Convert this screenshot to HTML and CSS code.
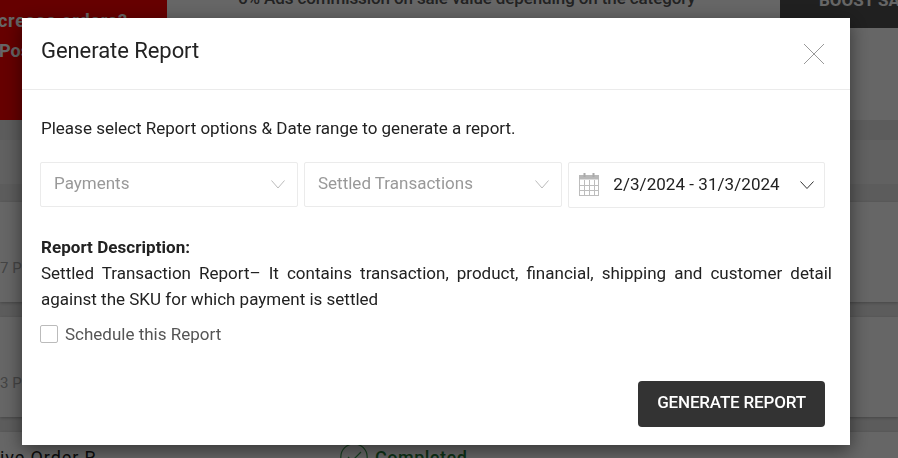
FILE: index.html
```
<!DOCTYPE html>
<html lang="en">
<head>
<meta charset="utf-8">
<title>Generate Report</title>
<link rel="stylesheet" href="styles.css">
</head>
<body>
<main class="page">
  <section class="banner">
    <div class="promo"><span class="promo-a">crease orders?</span><span class="promo-b">Post</span></div>
    <div class="commission">6% Ads commission on sale value depending on the category</div>
    <div class="boost">BOOST SALES</div>
  </section>
  <div class="tabs"></div>
  <article class="row"><span class="time">7 PM</span></article>
  <article class="row"><span class="time">3 PM</span></article>
  <article class="row last">
    <span class="order">ive Order R</span>
    <svg class="done" viewBox="0 0 28 28"><circle cx="14" cy="14" r="13.2"/><path d="M8 14l4 4 9-9"/></svg>
    <span class="status">Completed</span>
  </article>
</main>
<div class="overlay">
  <section class="modal">
    <header class="head">
      <h1>Generate Report</h1>
      <svg class="close" viewBox="0 0 22 22"><path d="M1 1L21 21M21 1L1 21"/></svg>
    </header>
    <div class="body">
      <p class="intro">Please select Report options &amp; Date range to generate a report.</p>
      <div class="fields">
        <div class="select"><span>Payments</span><svg class="chev" viewBox="0 0 14 9"><path d="M.5 .5L7 8L13.500 .5"/></svg></div>
        <div class="select"><span>Settled Transactions</span><svg class="chev" viewBox="0 0 14 9"><path d="M.5 .5L7 8L13.500 .5"/></svg></div>
        <div class="select date">
          <svg class="cal" viewBox="0 0 20 23">
            <path class="cal-fill" d="M0 2h20v4.500H0z"/>
            <path class="cal-ring" d="M5.500 0v4M14.500 0v4"/>
            <path class="cal-grid" d="M.5 6v16.500h19V6M5.500 7v15M10.500 7v15M15.500 7v15M0 12.500h20M0 17.500h20M0 22.500h20"/>
          </svg>
          <span class="range">2/3/2024 - 31/3/2024</span>
          <svg class="chev" viewBox="0 0 14 9"><path d="M.5 .5L7 7.500L13.500 .5"/></svg>
        </div>
      </div>
      <h2>Report Description:</h2>
      <p class="desc"><span class="line wide">Settled Transaction Report– It contains transaction, product, financial, shipping and customer detail</span> <span class="line">against the SKU for which payment is settled</span></p>
      <label class="schedule"><span class="box"></span><span>Schedule this Report</span></label>
      <button class="submit" type="button">GENERATE REPORT</button>
    </div>
  </section>
</div>
</body>
</html>
```
FILE: styles.css
```
* { box-sizing: border-box; }
body, h1, h2, p { margin: 0; }
body { font-family: Roboto, "Liberation Sans", sans-serif; font-size: 17px; color: #222; overflow: hidden; height: 458px; }
svg { display: block; fill: none; flex: none; }
.page { height: 458px; overflow: hidden; background: #e7e7e7; white-space: nowrap; }
.banner { height: 120px; background: #fff; display: flex; }
.promo { width: 167px; flex: none; background: #ff0000; color: #fff; font-weight: 700; font-size: 18px; line-height: 30px; padding-top: 6px; display: flex; flex-direction: column; }
.promo-a { margin-left: -2px; letter-spacing: .7px; }
.promo-b { margin-left: -1px; }
.commission { width: 613px; flex: none; padding-left: 71px; color: #555; font-weight: 500; line-height: 20px; margin-top: -12px; letter-spacing: -.11px; }
.boost { width: 118px; flex: none; height: 28px; background: #505050; color: #fff; font-weight: 700; padding-left: 39px; line-height: 20px; overflow: hidden; }
.boost { line-height: 0; padding-top: 0; }
.tabs { height: 44px; margin: 20px 0 18px; background: #f2f2f2; }
.row { height: 100px; margin-bottom: 15px; background: #fff; box-shadow: 0 1px 3px rgba(0,0,0,.25); display: flex; padding-top: 56px; line-height: 20px; }
.time { color: #aaa; font-size: 15px; }
.last { padding-top: 11px; }
.order { width: 340px; flex: none; letter-spacing: .9px; line-height: 30px; font-size: 18px; }
.done { width: 28px; height: 28px; stroke: #3b9c50; stroke-width: 1.2; }
.status { margin-left: 7px; color: #247c38; font-size: 18px; line-height: 30px; font-weight: 500; letter-spacing: .5px; }
.overlay { position: fixed; inset: 0; background: rgba(0,0,0,.6); padding: 18px 48px 13px 22px; }
.modal { height: 427px; width: 828px; background: #fff; box-shadow: 0 5px 18px rgba(0,0,0,.5); white-space: nowrap; }
.head { height: 72px; border-bottom: 1px solid #ebebeb; display: flex; justify-content: space-between; padding: 18px 25px 0 19px; }
h1 { font-size: 22px; font-weight: 400; line-height: 30px; letter-spacing: -.06px; }
.close { width: 22px; height: 22px; margin-top: 7px; stroke: #999; }
.body { padding: 26px 18px 0; display: flex; flex-direction: column; }
.intro { line-height: 24px; padding-left: 1px; }
.fields { display: grid; grid-template-columns: 258px 258px 257px; gap: 6px; margin-top: 22px; }
.select { height: 45px; border: 1px solid #ebebeb; border-radius: 2px; display: flex; align-items: center; justify-content: space-between; padding: 0 12px 3px 13px; color: #999; }
.chev { width: 14px; height: 9px; stroke: #bbb; margin-top: 3px; }
.date { height: 46px; padding: 0 9px 3px 10px; color: #222; }
.range { margin-left: -5px; letter-spacing: .05px; }
.date .chev { stroke: #333; width: 16px; margin-top: 4px; }
.cal { width: 20px; height: 23px; margin-top: 2px; }
.cal-fill { fill: #b8b8b8; }
.cal-ring { stroke: #aaa; stroke-width: 2; }
.cal-grid { stroke: #bdbdbd; }
h2 { font-size: 17px; font-weight: 700; line-height: 26px; margin-top: 26px; padding-left: 1px; letter-spacing: .05px; }
.desc { line-height: 26px; padding-left: 1px; width: 792px; }
.line { display: block; }
.wide { text-align-last: justify; }
.schedule { display: flex; align-items: center; gap: 7px; margin-top: 10px; height: 24px; color: #555; }
.box { width: 18px; height: 18px; border: 1px solid #bbb; border-radius: 2px; }
.submit { align-self: flex-end; width: 187px; height: 46px; margin: 35px 7px 0 0; border: 0; border-radius: 4px; background: #333; color: #fff; font: 500 17px/20px Roboto, sans-serif; letter-spacing: -.18px; padding: 0 0 4px; white-space: nowrap; }
```
